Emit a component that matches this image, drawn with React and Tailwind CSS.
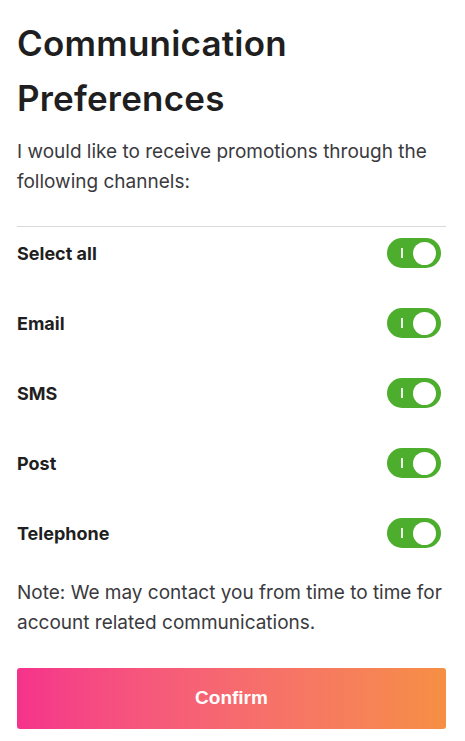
import { useState } from 'react'

const channels = ['Select all', 'Email', 'SMS', 'Post', 'Telephone']

function Toggle({ on, onClick }) {
  return (
    <button
      onClick={onClick}
      className={`relative w-[54px] h-[30px] rounded-full flex items-center shrink-0 ${on ? 'bg-[#4cae2c]' : 'bg-gray-300'}`}
    >
      <span className="absolute left-[14px] top-[10px] w-[1.5px] h-[10px] bg-white/90" />
      <span
        className={`absolute top-[3.5px] w-[23px] h-[23px] rounded-full bg-white ${on ? 'left-[26px]' : 'left-[4px]'}`}
      />
    </button>
  )
}

export default function App() {
  const [state, setState] = useState({ Email: true, SMS: true, Post: true, Telephone: true })
  const allOn = Object.values(state).every(Boolean)

  const flip = (name) => {
    if (name === 'Select all') {
      const v = !allOn
      setState({ Email: v, SMS: v, Post: v, Telephone: v })
    } else {
      setState({ ...state, [name]: !state[name] })
    }
  }

  return (
    <div className="min-h-screen bg-white pl-[17px] pr-[19px] pt-[16px] text-[#1f1f22] font-['Inter',sans-serif]">
      <h1 className="text-[35px] leading-[55px] font-semibold tracking-[0.2px]">
        Communication Preferences
      </h1>
      <p className="mt-[11px] text-[19px] leading-[30px] text-[#3a3a3e]">
        I would like to receive promotions through the following channels:
      </p>

      <div className="mt-[29px] border-t border-[#d9d9d9] flex flex-col gap-[18px]">
        {channels.map((c) => (
          <div key={c} className="h-[52px] flex items-center justify-between">
            <span className="text-[18px] font-bold">{c}</span>
            <div className="mr-[5px]">
              <Toggle on={c === 'Select all' ? allOn : state[c]} onClick={() => flip(c)} />
            </div>
          </div>
        ))}
      </div>

      <p className="mt-[19px] text-[19px] leading-[30px] text-[#3a3a3e]">
        Note: We may contact you from time to time for account related communications.
      </p>

      <button className="mt-[30px] w-full h-[61px] rounded-[3px] bg-gradient-to-r from-[#f5328b] to-[#f68f43] text-white text-[19px] font-bold font-['Liberation_Sans',sans-serif]">
        Confirm
      </button>
    </div>
  )
}
